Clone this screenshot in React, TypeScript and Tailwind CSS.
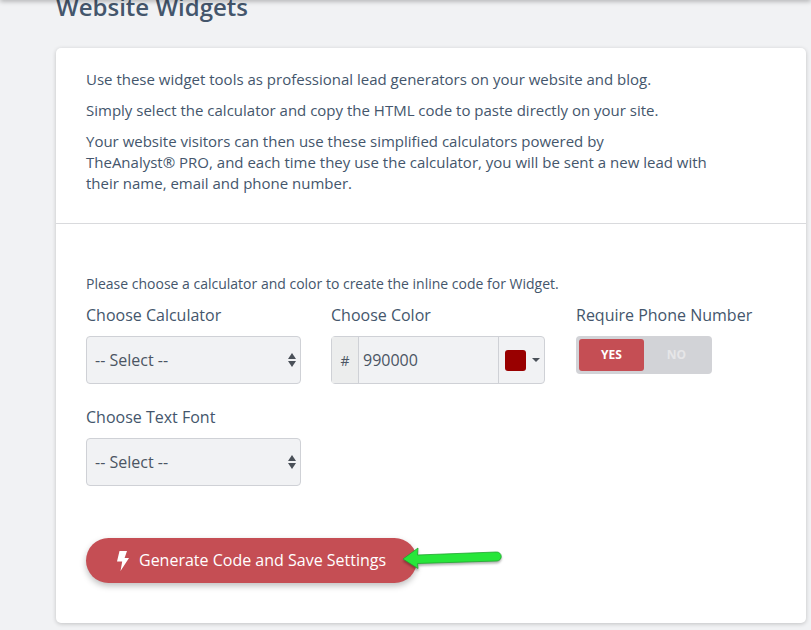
import React from "react";

const SelectBox = () => (
  <div className="flex items-center justify-between w-[215px] h-[48px] rounded-[4px] border border-[#cfd1d6] bg-[#f1f2f4] pl-2 pr-[3px] text-[16px] text-[#4b5563]">
    <span>-- Select --</span>
    <svg width="10" height="16" viewBox="0 0 10 16" fill="#4a5058">
      <path d="M5 1 9 7H1z" />
      <path d="M5 15 1 9h8z" />
    </svg>
  </div>
);

const App: React.FC = () => {
  return (
    <div className="relative h-[630px] w-[811px] overflow-hidden bg-[#f1f2f4] font-['Open_Sans',sans-serif] text-[#44566c]">
      {/* TOP SHADOW */}
      <div className="absolute inset-x-0 top-[-4px] h-[4px] shadow-[0_1px_5px_rgba(0,0,0,0.35)]" />

      <div className="ml-[56px] w-[750px]">
        <h1 className="mt-[-10px] h-[58px] text-[24px] font-semibold leading-[33px]">
          Website Widgets
        </h1>

        {/* CARD */}
        <div className="h-[575px] rounded-[5px] bg-white shadow-[0_1px_4px_rgba(0,0,0,0.2)]">
          <div className="h-[176px] border-b border-[#d9dadd] pl-[30px] pt-[21px] text-[15px] leading-[21px]">
            <p>Use these widget tools as professional lead generators on your website and blog.</p>
            <p className="mt-[10px]">Simply select the calculator and copy the HTML code to paste directly on your site.</p>
            <p className="mt-[10px] w-[625px]">
              Your website visitors can then use these simplified calculators powered by
              <br />
              TheAnalyst® PRO, and each time they use the calculator, you will be sent a new lead with their name, email and phone number.
            </p>
          </div>

          <div className="pl-[30px] pt-[51px]">
            <p className="text-[14px] leading-[18px]">
              Please choose a calculator and color to create the inline code for Widget.
            </p>

            <div className="mt-[11px] flex">
              <div className="w-[245px]">
                <div className="mb-[10px] text-[16px] leading-[22px]">Choose Calculator</div>
                <SelectBox />
              </div>
              <div className="w-[245px]">
                <div className="mb-[10px] text-[16px] leading-[22px]">Choose Color</div>
                <div className="flex h-[48px] w-[214px] rounded-[4px] border border-[#cfd1d6] bg-[#f1f2f4] text-[16px] text-[#4b5563]">
                  <div className="flex w-[27px] items-center justify-center border-r border-[#cfd1d6] bg-[#eceded] text-[14px]">#</div>
                  <div className="flex flex-1 items-center pl-[4px]">990000</div>
                  <div className="flex w-[46px] items-center border-l border-[#cfd1d6] pl-[6px]">
                    <div className="h-[21px] w-[21px] rounded-[3px] bg-[#990000]" />
                    <div className="ml-[6px] h-0 w-0 border-x-[4px] border-t-[4px] border-x-transparent border-t-[#4a5058]" />
                  </div>
                </div>
              </div>
              <div>
                <div className="mb-[10px] text-[16px] leading-[22px]">Require Phone Number</div>
                <div className="flex h-[38px] w-[136px] rounded-[4px] bg-[#d2d3d7] p-[3px] text-[12px] font-bold">
                  <div className="flex w-[65px] items-center justify-center rounded-[3px] bg-[#c54e54] text-white">YES</div>
                  <div className="flex flex-1 items-center justify-center text-[#e6e6e8]">NO</div>
                </div>
              </div>
            </div>

            <div className="mt-[22px]">
              <div className="mb-[10px] text-[16px] leading-[22px]">Choose Text Font</div>
              <SelectBox />
            </div>

            {/* BUTTON */}
            <div className="relative mt-[52px] w-fit">
              <button className="flex h-[45px] w-[331px] items-center rounded-full bg-[#c54e54] pl-[30px] text-[16px] font-medium text-white shadow-[0_3px_6px_rgba(0,0,0,0.25)]">
                <svg width="14" height="22" viewBox="0 0 14 22" fill="white" className="mr-[9px]">
                  <path d="M3.5 1h7.500L8.600 8H13L4.500 21l1.700-9.600H1z" />
                </svg>
                <span className="mt-[-2px]">Generate Code and Save Settings</span>
              </button>
              {/* GREEN ARROW */}
              <svg width="102" height="28" viewBox="0 0 102 28" className="absolute left-[316px] top-[7px] drop-shadow-[0_2px_1px_rgba(0,0,0,0.3)]">
                <path d="M1 14 16 3l-.5 7 79-3a4.500 4.500 0 0 1 .5 9l-79.500 2.500.5 5z" fill="#27e63a" stroke="#1fa52e" strokeWidth="0.8" strokeLinejoin="round" />
              </svg>
            </div>
          </div>
        </div>
      </div>
    </div>
  );
};

export default App;
